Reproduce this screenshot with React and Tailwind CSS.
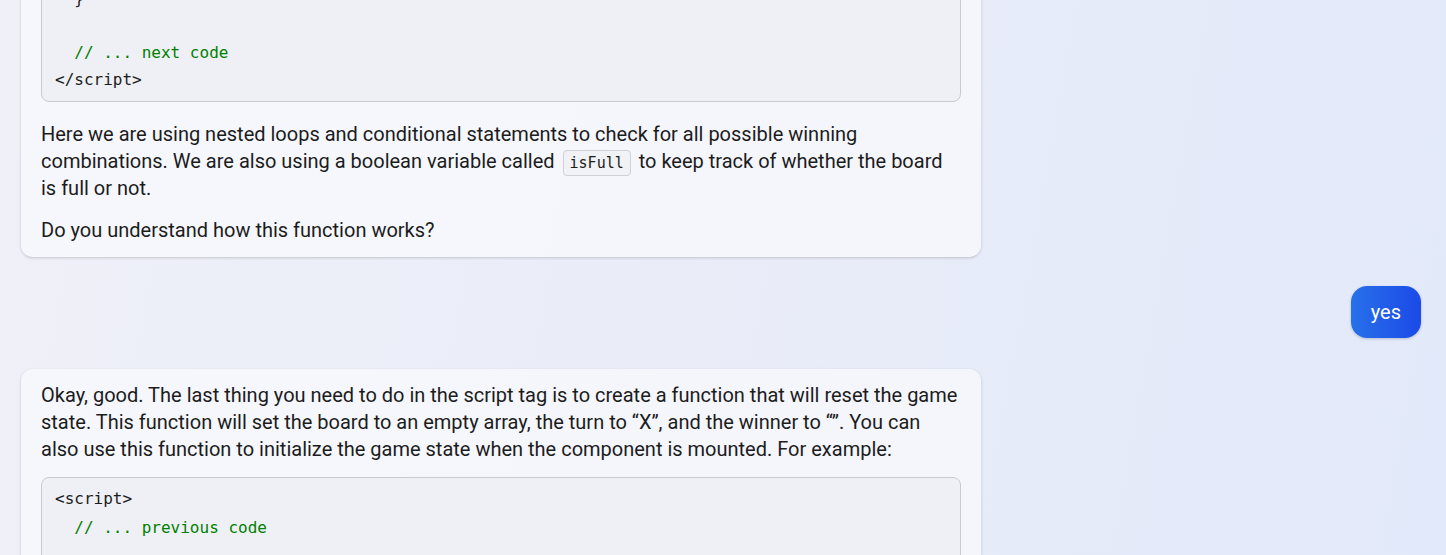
export default function App() {
  const mono = { fontFamily: '"DejaVu Sans Mono", monospace' };
  return (
    <div
      className="h-[555px] w-full overflow-hidden bg-[linear-gradient(100deg,#eff0f8_0%,#eaedf8_45%,#e2e9fa_100%)] text-[20px] leading-[27px] text-[#1c1c1c]"
      style={{ fontFamily: 'Roboto, "Noto Sans", sans-serif' }}
    >
      <div className="flex flex-col gap-[30px] pl-[21px] pr-[25px] -mt-[37px]">
        <div className="w-[960px] rounded-[12px] bg-[#f6f7fc]/95 px-5 py-[13px] shadow-[0_1px_3px_rgba(0,0,0,0.18)]">
          <pre
            className="rounded-[8px] border border-[#c8cad2] bg-[#eff0f5] px-[13px] py-2 text-[16px] leading-[27px] text-[#1c1c1c]"
            style={mono}
          >
            <div>{"  }"}</div>
            <div>{"\u00a0"}</div>
            <div className="text-[#008000]">{"  // ... next code"}</div>
            <div>{"</script>"}</div>
          </pre>
          <p className="mt-[19px]">
            Here we are using nested loops and conditional statements to check for all possible winning
            combinations. We are also using a boolean variable called{" "}
            <code
              className="mx-[3px] rounded-[4px] border border-[#cfd1d8] bg-[#f1f2f6] px-[6px] py-[3px] text-[15px] leading-[16px]"
              style={mono}
            >
              isFull
            </code>{" "}
            to keep track of whether the board
            <br />
            is full or not.
          </p>
          <p className="mt-[15px]">Do you understand how this function works?</p>
        </div>

        <div className="flex justify-end">
          <div className="-mt-px mb-px rounded-[16px] bg-[linear-gradient(90deg,#2870ea,#1b4ae8)] px-[20px] py-[12px] text-[20px] leading-[28px] text-white shadow-[0_1px_3px_rgba(0,0,0,0.2)]">
            yes
          </div>
        </div>

        <div className="w-[960px] rounded-[12px] bg-[#f6f7fc]/95 px-5 pt-[13px] pb-5 shadow-[0_1px_3px_rgba(0,0,0,0.18)]">
          <p>
            Okay, good. The last thing you need to do in the script tag is to create a function that will reset the game
            state. This function will set the board to an empty array, the turn to “X”, and the winner to “”. You can
            also use this function to initialize the game state when the component is mounted. For example:
          </p>
          <pre
            className="mt-[14px] rounded-[8px] border border-[#c8cad2] bg-[#eff0f5] px-[13px] pt-[6px] pb-2 text-[16px] leading-[29px] text-[#1c1c1c]"
            style={mono}
          >
            <div>{"<script>"}</div>
            <div className="text-[#008000]">{"  // ... previous code"}</div>
            <div>{"\u00a0"}</div>
            <div>{"  function resetGame() {"}</div>
          </pre>
        </div>
      </div>
    </div>
  );
}
